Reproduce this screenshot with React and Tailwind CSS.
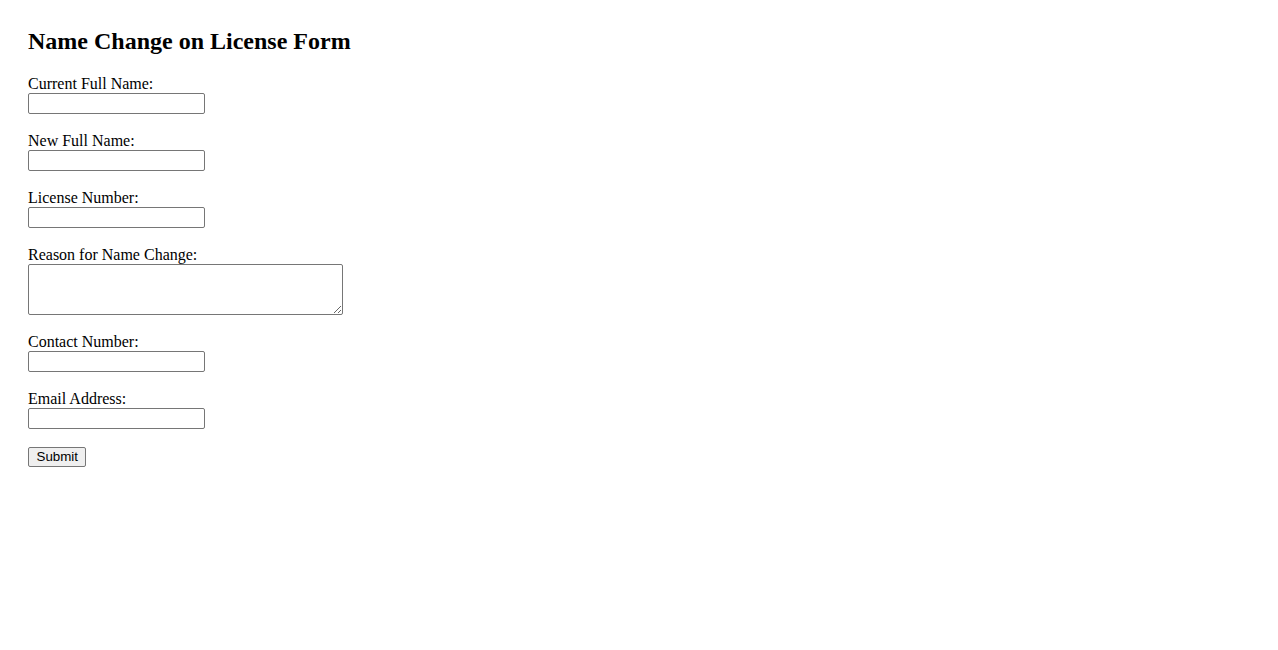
export default function App() {
  const fields = [
    { label: "Current Full Name:", type: "text" },
    { label: "New Full Name:", type: "text" },
    { label: "License Number:", type: "text" },
    { label: "Reason for Name Change:", type: "textarea" },
    { label: "Contact Number:", type: "tel" },
    { label: "Email Address:", type: "email" },
  ];

  return (
    <div className="min-h-screen bg-white pl-[28px] pt-[28px] text-black" style={{ fontFamily: '"Liberation Serif", "Times New Roman", serif' }}>
      <h2 className="mb-[19.5px] text-[24px] font-bold leading-[27.6px]">Name Change on License Form</h2>
      <form className="flex flex-col items-start">
        {fields.map((f) => (
          <div key={f.label} className="mb-[18.6px] flex flex-col items-start">
            <label className="block text-[16px] leading-[18.4px]">{f.label}</label>
            {f.type === "textarea" ? (
              <textarea
                rows={3}
                className="-mt-px h-[51px] w-[315px] rounded-[2px] border border-[#767676] bg-white px-[2px] py-[2px] text-[13.33px]"
                style={{ resize: "both", fontFamily: '"Liberation Mono", monospace' }}
              />
            ) : (
              <input
                type={f.type}
                className="-mt-px h-[21px] w-[177px] rounded-[2px] border border-[#767676] bg-white px-[2px] text-[13.33px]"
              />
            )}
          </div>
        ))}
        <button
          type="button"
          className="h-[20px] rounded-[2px] border border-[#767676] bg-[#efefef] px-[7.5px] text-[13.33px] leading-[16px] text-black"
          style={{ fontFamily: '"Liberation Sans", Arial, sans-serif' }}
        >
          Submit
        </button>
      </form>
    </div>
  );
}
